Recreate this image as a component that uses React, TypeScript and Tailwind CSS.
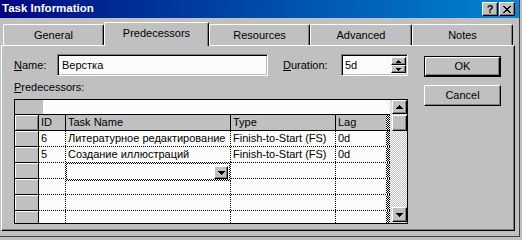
import React from 'react';

const raised =
  'bg-[#c0c0c0] border border-t-white border-l-white border-r-black border-b-black shadow-[inset_-1px_-1px_0_#808080]';
const sunken =
  'border border-t-[#808080] border-l-[#808080] border-r-white border-b-white shadow-[inset_1px_1px_0_#000,inset_-1px_-1px_0_#c0c0c0]';
const checkerDark = 'bg-[image:repeating-conic-gradient(#000_0_25%,#fff_0_50%)] bg-[length:2px_2px]';
const checkerLight = 'bg-[image:repeating-conic-gradient(#c0c0c0_0_25%,#fff_0_50%)] bg-[length:2px_2px]';

function Arrow({ dir, w = 7, h = 4 }: { dir: 'up' | 'down'; w?: number; h?: number }) {
  const pts = dir === 'up' ? `0,${h} ${w / 2},0 ${w},${h}` : `0,0 ${w / 2},${h} ${w},0`;
  return (
    <svg width={w} height={h} viewBox={`0 0 ${w} ${h}`} shapeRendering="crispEdges">
      <polygon points={pts} fill="#000" />
    </svg>
  );
}

function TitleBar() {
  return (
    <div className="h-[18px] flex items-center justify-between bg-linear-to-r from-[#000080] to-[#1084d0] pl-[2px] pr-[4px]">
      <span className="text-white font-bold text-[11.5px] leading-none">Task Information</span>
      <div className="flex">
        <div className={`${raised} w-[16px] h-[14px] flex items-center justify-center font-bold text-[11px] leading-none`}>?</div>
        <div className={`${raised} w-[16px] h-[14px] flex items-center justify-center ml-[1px]`}>
          <svg width="8" height="7" viewBox="0 0 8 7" shapeRendering="crispEdges">
            <path d="M0 0h2v1h-2zM6 0h2v1h-2zM1 1h2v1h-2zM5 1h2v1h-2zM2 2h4v1h-4zM3 3h2v1h-2zM2 4h4v1h-4zM1 5h2v1h-2zM5 5h2v1h-2zM0 6h2v1h-2zM6 6h2v1h-2z" fill="#000" />
          </svg>
        </div>
      </div>
    </div>
  );
}

const tabs = [
  { label: 'General', w: 'w-[101px]' },
  { label: 'Predecessors', w: 'w-[105px]', active: true },
  { label: 'Resources', w: 'w-[101px]' },
  { label: 'Advanced', w: 'w-[102px]' },
  { label: 'Notes', w: 'w-[101px]' },
];

function Tabs() {
  return (
    <div className="mt-[4px] h-[23px] flex items-end pl-[3px]">
      {tabs.map((t) =>
        t.active ? (
          <div
            key={t.label}
            className={`${t.w} h-[24px] -mb-[1px] relative z-10 bg-[#c0c0c0] border-t border-l border-r border-t-white border-l-white border-r-black rounded-t-[2px] shadow-[inset_-1px_0_0_#808080] flex items-center justify-center pb-[3px]`}
          >
            {t.label}
          </div>
        ) : (
          <div
            key={t.label}
            className={`${t.w} h-[21px] bg-[#c0c0c0] border-t border-l border-r border-t-white border-l-white border-r-black rounded-t-[2px] shadow-[inset_-1px_0_0_#808080] flex items-center justify-center`}
          >
            {t.label}
          </div>
        )
      )}
    </div>
  );
}

const rows = [
  { id: '6', name: 'Литературное редактирование', type: 'Finish-to-Start (FS)', lag: '0d' },
  { id: '5', name: 'Создание иллюстраций', type: 'Finish-to-Start (FS)', lag: '0d' },
  { id: '', name: '', type: '', lag: '', focus: true },
  { id: '', name: '', type: '', lag: '' },
  { id: '', name: '', type: '', lag: '' },
  { id: '', name: '', type: '', lag: '', short: true },
];

function Grid() {
  return (
    <div className="mt-[5px] w-[394px] h-[125px] border border-black flex bg-[#fcfcfc]">
      <div className="w-[375px] flex flex-col">
        {/* edit bar */}
        <div className="h-[15px] flex border-b border-black">
          <div className="w-[28px] bg-[#c0c0c0]" />
          <div className="flex-1 bg-[#fcfcfc]" />
        </div>
        {/* header */}
        <div className="h-[16px] flex border-b border-black bg-[#c0c0c0]">
          <div className="w-[24px] border-r border-black shadow-[inset_1px_1px_0_#fff,inset_-1px_-1px_0_#808080]" />
          <div className="w-[27px] border-r border-black pl-[2px] leading-[15px]">ID</div>
          <div className="w-[165px] border-r border-black pl-[2px] leading-[15px]">Task Name</div>
          <div className="w-[105px] border-r border-black pl-[2px] leading-[15px]">Type</div>
          <div className="w-[50px] pl-[2px] leading-[15px]">Lag</div>
          <div className={`w-[4px] ${checkerDark}`} />
        </div>
        {rows.map((r, i) => (
          <div key={i} className={`${r.short ? 'h-[12px]' : 'h-[16px] border-b border-dotted border-black'} flex`}>
            <div className={`w-[24px] border-r border-black bg-[#c0c0c0] shadow-[inset_1px_1px_0_#fff] ${r.short ? '' : 'border-b border-b-black border-solid -mb-[1px]'}`} />
            <div className="w-[27px] border-r border-dotted border-black pl-[2px] leading-[15px]">{r.id}</div>
            <div className="w-[165px] border-r border-dotted border-black pl-[2px] leading-[15px] relative whitespace-nowrap">
              {r.name}
              {r.focus && (
                <div className={`absolute left-[-1px] top-[-1px] w-[166px] h-[19px] ${checkerDark} p-[2px] z-10`}>
                  <div className="w-full h-full bg-[#fcfcfc] flex justify-end items-end">
                    <div className={`${raised} w-[14px] h-[13px] flex items-center justify-center mr-[1px]`}>
                      <Arrow dir="down" w={7} h={4} />
                    </div>
                  </div>
                </div>
              )}
            </div>
            <div className="w-[105px] border-r border-dotted border-black pl-[2px] leading-[15px] whitespace-nowrap">{r.type}</div>
            <div className="w-[50px] pl-[2px] leading-[15px]">{r.lag}</div>
            <div className={`w-[4px] ${checkerDark}`} />
          </div>
        ))}
      </div>
      {/* scrollbar */}
      <div className={`w-[17px] flex flex-col items-end ${checkerLight}`}>
        <div className={`${raised} w-[15px] h-[14px] flex items-center justify-center`}>
          <Arrow dir="up" />
        </div>
        <div className={`${raised} w-[15px] h-[16px] mt-[1px]`} />
        <div className="flex-1" />
        <div className={`${raised} w-[15px] h-[15px] mb-[1px] flex items-center justify-center`}>
          <Arrow dir="down" />
        </div>
      </div>
    </div>
  );
}

function Panel() {
  return (
    <div className="ml-[1px] w-[514px] h-[186px] border border-t-white border-l-white border-r-black border-b-black shadow-[inset_-1px_-1px_0_#808080] pl-[12px] pt-[8px] flex">
      <div className="w-[394px] flex flex-col">
        <div className="h-[22px] flex items-center">
          <span className="w-[43px]">
            <u>N</u>ame:
          </span>
          <div className={`${sunken} w-[211px] h-[22px] bg-[#fcfcfc] flex items-center pl-[4px]`}>Верстка</div>
          <span className="w-[58px] ml-[15px]">
            <u>D</u>uration:
          </span>
          <div className={`${sunken} w-[67px] h-[22px] bg-[#fcfcfc] flex items-center pl-[3px] relative`}>
            5d
            <div className="absolute right-[1px] top-[2px] flex flex-col">
              <div className={`${raised} w-[15px] h-[8px] flex items-center justify-center`}>
                <Arrow dir="up" w={5} h={3} />
              </div>
              <div className={`${raised} w-[15px] h-[8px] flex items-center justify-center`}>
                <Arrow dir="down" w={5} h={3} />
              </div>
            </div>
          </div>
        </div>
        <div className="mt-[5px] h-[13px] leading-[13px]">
          <u>P</u>redecessors:
        </div>
        <Grid />
      </div>
      <div className="ml-[16px] pt-[2px] flex flex-col">
        <div className="border border-black">
          <div className={`${raised} w-[75px] h-[19px] flex items-center justify-center`}>OK</div>
        </div>
        <div className={`${raised} w-[77px] h-[21px] mt-[8px] flex items-center justify-center`}>Cancel</div>
      </div>
    </div>
  );
}

export default function App() {
  return (
    <div className="w-[522px] h-[240px] bg-[#c0c0c0] font-['Liberation_Sans',Arial,sans-serif] text-[11px] text-black overflow-hidden">
      <div className="w-[520px] h-[237px] border-r border-b border-[#404040] flex flex-col">
        <TitleBar />
        <Tabs />
        <Panel />
      </div>
    </div>
  );
}
